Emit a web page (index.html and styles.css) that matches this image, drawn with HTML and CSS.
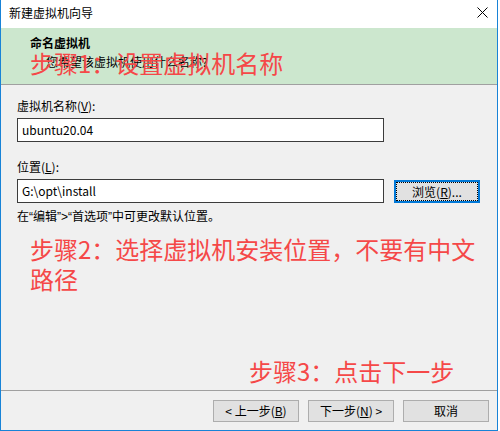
FILE: index.html
```html
<!DOCTYPE html>
<html lang="zh-CN">
<head>
<meta charset="utf-8">
<title>新建虚拟机向导</title>
<link rel="stylesheet" href="styles.css">
</head>
<body>
<div class="window">
  <div class="titlebar">
    <span class="title">新建虚拟机向导</span>
    <svg class="close" width="11" height="11" viewBox="0 0 11 11"><path d="M0.5 0.5 L10.5 10.5 M10.5 0.5 L0.5 10.5" stroke="#000" stroke-width="1" fill="none"/></svg>
  </div>
  <div class="header">
    <div class="h-title">命名虚拟机</div>
    <div class="h-sub">您希望该虚拟机使用什么名称?</div>
    <div class="note note-1">步骤1：设置虚拟机名称</div>
  </div>
  <div class="main">
    <label class="label">虚拟机名称(<u>V</u>):</label>
    <div class="field-row">
      <div class="input">ubuntu20.04</div>
    </div>
    <label class="label label-2">位置(<u>L</u>):</label>
    <div class="field-row">
      <div class="input">G:\opt\install</div>
      <div class="btn btn-focus"><span class="focus-rect">浏览(<u>R</u>)...</span></div>
    </div>
    <div class="hint">在<span class="q">“</span>编辑<span class="q">”&gt;“</span>首选项<span class="q">”</span>中可更改默认位置。</div>
    <div class="note note-2">步骤2：选择虚拟机安装位置，不要有中文路径</div>
    <div class="note note-3">步骤3：点击下一步</div>
  </div>
  <div class="footer">
    <div class="btn">&lt; 上一步(<u>B</u>)</div>
    <div class="btn">下一步(<u>N</u>) &gt;</div>
    <div class="btn">取消</div>
  </div>
</div>
</body>
</html>
```
FILE: styles.css
```css
html, body {
  margin: 0;
  padding: 0;
  background: #ffffff;
}
body {
  width: 500px;
  height: 431px;
  overflow: hidden;
  font-family: "Noto Sans CJK SC", "Microsoft YaHei", sans-serif;
  font-size: 12px;
  color: #000;
}
.window {
  width: 496px;
  height: 430px;
  border-left: 1px solid #1883d7;
  border-right: 1px solid #1883d7;
  border-bottom: 1px solid #1883d7;
  background: #f0f0f0;
  display: flex;
  flex-direction: column;
}
.titlebar {
  height: 28px;
  background: #ffffff;
  display: flex;
  align-items: center;
  justify-content: space-between;
  padding: 0 9px 0 8px;
  flex: none;
}
.title {
  line-height: 16px;
  margin-top: -2px;
}
.close {
  display: block;
  margin-top: -4px;
}
.header {
  position: relative;
  background: #cce7ce;
  border-bottom: 1px solid #a0a0a0;
  padding: 7px 0 0 29px;
  box-sizing: border-box;
  height: 57px;
  flex: none;
}
.h-title {
  font-weight: bold;
  line-height: 16px;
}
.h-sub {
  line-height: 16px;
  margin-top: 3px;
  padding-left: 16px;
}
.note {
  color: #f54848;
  font-size: 24px;
  line-height: 30px;
}
.note-1 {
  position: absolute;
  left: 29px;
  top: 20px;
  white-space: nowrap;
}
.main {
  flex: 1;
  display: flex;
  flex-direction: column;
  padding: 13px 0 0 16px;
}
.label {
  display: block;
  line-height: 16px;
}
.label-2 {
  margin-top: 17px;
}
.field-row {
  display: flex;
  align-items: flex-start;
  gap: 10px;
  margin-top: 4px;
}
.input {
  height: 22px;
  border: 1px solid #3c3c3c;
  background: #ffffff;
  line-height: 22px;
  padding-left: 4px;
  width: 361px;
}
.hint {
  line-height: 16px;
  margin-top: 5px;
}
.q {
  font-family: "Liberation Sans", sans-serif;
}
.note-2 {
  width: 455px;
  margin: 9px 0 0 13px;
}
.note-3 {
  margin: auto 0 4px 232px;
}
.btn {
  width: 84px;
  height: 20px;
  border: 1px solid #adadad;
  background: #e1e1e1;
  display: flex;
  align-items: center;
  justify-content: center;
  line-height: 16px;
  flex: none;
}
.btn-focus {
  width: 82px;
  height: 19px;
  border: 2px solid #0078d7;
  margin-top: 1px;
}
.focus-rect {
  display: flex;
  align-items: center;
  justify-content: center;
  width: 80px;
  height: 17px;
  border: 1px dotted #000;
}
.footer {
  flex: none;
  height: 40px;
  box-sizing: border-box;
  border-top: 1px solid #a0a0a0;
  display: flex;
  justify-content: flex-end;
  align-items: flex-start;
  gap: 9px;
  padding: 9px 8px 0 0;
}
u {
  text-decoration: underline;
  text-underline-offset: 1px;
}
```
